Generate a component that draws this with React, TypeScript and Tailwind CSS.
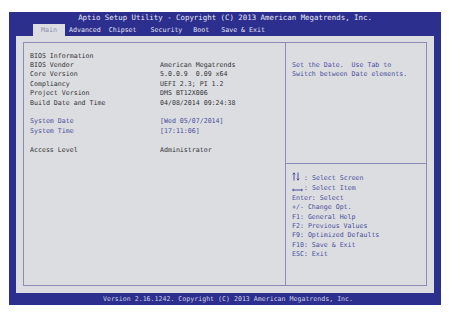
const TABS = [
  { label: "Main", ml: "ml-[24px]" },
  { label: "Advanced", ml: "ml-[4px]" },
  { label: "Chipset", ml: "ml-[8px]" },
  { label: "Security", ml: "ml-[14px]" },
  { label: "Boot", ml: "ml-[11px]" },
  { label: "Save & Exit", ml: "ml-[12px]" },
];

type Row = { label: string; value: string; blue?: boolean } | null;

const ROWS: Row[] = [
  { label: "BIOS Information", value: "" },
  { label: "BIOS Vendor", value: "American Megatrends" },
  { label: "Core Version", value: "5.0.0.9  0.09 x64" },
  { label: "Compliancy", value: "UEFI 2.3; PI 1.2" },
  { label: "Project Version", value: "DMS BT12X006" },
  { label: "Build Date and Time", value: "04/08/2014 09:24:38" },
  null,
  { label: "System Date", value: "[Wed 05/07/2014]", blue: true },
  { label: "System Time", value: "[17:11:06]", blue: true },
  null,
  { label: "Access Level", value: "Administrator" },
];

const KEYS = [
  "Enter: Select",
  "+/- Change Opt.",
  "F1: General Help",
  "F2: Previous Values",
  "F9: Optimized Defaults",
  "F10: Save & Exit",
  "ESC: Exit",
];

function UpDown() {
  return (
    <svg width="12" height="9" viewBox="0 0 12 9" className="inline-block align-[-1px]">
      <path d="M2 8.5V1M0.8 2.4L2 0.8L3.2 2.4" stroke="#4a4f9e" strokeWidth="1" fill="none" />
      <path d="M6 0.5V8M4.8 6.6L6 8.2L7.2 6.6" stroke="#4a4f9e" strokeWidth="1" fill="none" />
    </svg>
  );
}

function LeftRight() {
  return (
    <svg width="12" height="9" viewBox="0 0 12 9" className="inline-block align-[-2px]">
      <path d="M0.5 7H10.5M1.8 6L0.6 7L1.8 8M9.2 6L10.4 7L9.2 8" stroke="#4a4f9e" strokeWidth="1" fill="none" />
    </svg>
  );
}

export default function App() {
  return (
    <div className="h-[315px] w-[455px] bg-white pl-[9px] pt-[12px] font-['DejaVu_Sans_Mono',monospace]">
      <div className="flex h-[293px] w-[432px] flex-col bg-[#2c2f8e]">
        <div className="flex h-[12px] items-center justify-center text-[7.4px] leading-none text-[#e6e7f2]">
          Aptio Setup Utility - Copyright (C) 2013 American Megatrends, Inc.
        </div>
        <div className="flex h-[12px] items-center text-[6.6px] leading-none text-[#e2e4f2]">
          {TABS.map((t, i) =>
            i === 0 ? (
              <div
                key={t.label}
                className={`${t.ml} flex h-full w-[32px] items-center justify-center bg-[#dcdde0] text-[#8a8eb4]`}
              >
                {t.label}
              </div>
            ) : (
              <div key={t.label} className={t.ml}>
                {t.label}
              </div>
            )
          )}
        </div>
        <div className="mx-[7px] h-[257px] bg-[#dcdde0] px-[7px] pb-[7px] pt-[6px]">
          <div className="flex h-full border border-[#8a8db6] text-[6.6px] leading-[9.4px]">
            <div className="w-[262px] border-r border-[#8a8db6] pl-[6px] pt-[8.5px] text-[#333336]">
              {ROWS.map((r, i) =>
                r ? (
                  <div key={i} className={`flex ${r.blue ? "text-[#4a4f9e]" : ""}`}>
                    <span className="w-[130px] whitespace-pre">{r.label}</span>
                    <span className="whitespace-pre">{r.value}</span>
                  </div>
                ) : (
                  <div key={i} className="h-[9.4px]" />
                )
              )}
            </div>
            <div className="flex flex-1 flex-col text-[#4a4f9e]">
              <div className="h-[121px] border-b border-[#8a8db6] pl-[6px] pt-[17.8px]">
                <div className="whitespace-pre">Set the Date.  Use Tab to</div>
                <div>Switch between Date elements.</div>
              </div>
              <div className="pl-[6px] pt-[8px]">
                <div className="whitespace-pre">
                  <UpDown />: Select Screen
                </div>
                <div className="whitespace-pre">
                  <LeftRight />: Select Item
                </div>
                {KEYS.map((k) => (
                  <div key={k} className="whitespace-pre">
                    {k}
                  </div>
                ))}
              </div>
            </div>
          </div>
        </div>
        <div className="flex h-[12px] items-center justify-center pl-[6px] text-[6.6px] leading-none text-[#cdd0e6]">
          Version 2.16.1242. Copyright (C) 2013 American Megatrends, Inc.
        </div>
      </div>
    </div>
  );
}
